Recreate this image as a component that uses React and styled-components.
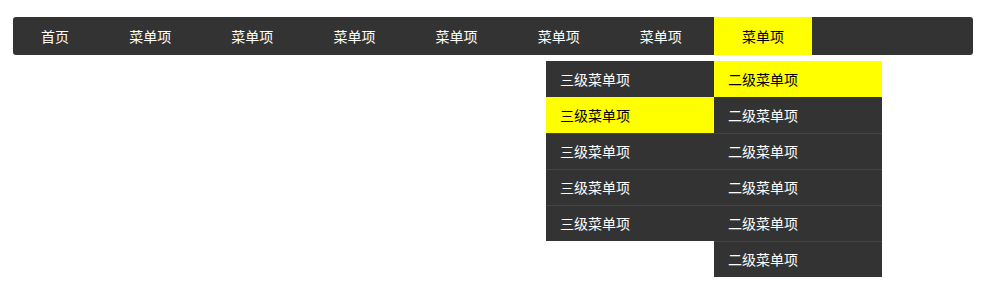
import React from "react";
import styled, { createGlobalStyle } from "styled-components";

const GlobalStyle = createGlobalStyle`
  body {
    margin: 0;
    background: #fff;
    font-family: "Noto Sans CJK SC", "Liberation Sans", sans-serif;
    font-size: 14px;
  }
`;

const Page = styled.div`
  min-height: 306px;
  box-sizing: border-box;
  padding: 17px 13px;
`;

const Nav = styled.ul`
  display: flex;
  gap: 4.15px;
  width: 960px;
  height: 38px;
  margin: 0;
  padding: 0;
  list-style: none;
  background: #333;
  border-radius: 3px;
`;

const NavItem = styled.li`
  position: relative;
  padding: 0 28px;
  line-height: 38px;
  color: ${(p) => (p.$active ? "#000" : "#fff")};
  background: ${(p) => (p.$active ? "#ff0" : "transparent")};
  white-space: nowrap;
`;

const Menu = styled.ul`
  position: absolute;
  top: 44px;
  left: ${(p) => p.$left}px;
  width: 168px;
  margin: 0;
  padding: 0;
  list-style: none;
  background: #333;
`;

const MenuItem = styled.li`
  box-sizing: border-box;
  height: 36px;
  padding: 0 14px;
  line-height: 36px;
  color: ${(p) => (p.$active ? "#000" : "#fff")};
  background: ${(p) => (p.$active ? "#ff0" : "#333")};
  text-align: left;

  &:nth-child(n + 3) {
    border-top: 1px solid #444;
    line-height: 34px;
  }
`;

const topItems = ["首页", "菜单项", "菜单项", "菜单项", "菜单项", "菜单项", "菜单项", "菜单项"];

export default function App() {
  return (
    <Page>
      <GlobalStyle />
      <Nav>
        {topItems.map((t, i) => {
          const active = i === topItems.length - 1;
          return (
            <NavItem key={i} $active={active}>
              {t}
              {active && (
                <>
                  <Menu $left={0}>
                    {[0, 1, 2, 3, 4, 5].map((j) => (
                      <MenuItem key={j} $active={j === 0}>
                        二级菜单项
                      </MenuItem>
                    ))}
                  </Menu>
                  <Menu $left={-168}>
                    {[0, 1, 2, 3, 4].map((j) => (
                      <MenuItem key={j} $active={j === 1}>
                        三级菜单项
                      </MenuItem>
                    ))}
                  </Menu>
                </>
              )}
            </NavItem>
          );
        })}
      </Nav>
    </Page>
  );
}
